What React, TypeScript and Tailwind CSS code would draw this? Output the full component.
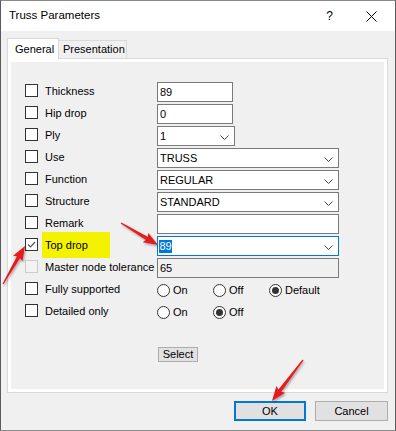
import React from 'react';

const font = { fontFamily: '"Liberation Sans", Arial, sans-serif' };

function Chevron() {
  return (
    <svg width="9" height="5" viewBox="0 0 9 5" className="absolute right-[5px] top-[8px]">
      <polyline points="0.5,0.5 4.5,4.5 8.5,0.5" fill="none" stroke="#444" strokeWidth="1" />
    </svg>
  );
}

function Checkbox({ checked = false, disabled = false }: { checked?: boolean; disabled?: boolean }) {
  return (
    <div
      className={`mt-[2px] h-[13px] w-[13px] shrink-0 border ${
        disabled ? 'border-[#cccccc] bg-[#f3f3f3]' : 'border-[#333333] bg-white'
      }`}
    >
      {checked && (
        <svg width="11" height="11" viewBox="0 0 11 11">
          <polyline points="2,5.5 4.5,8 9,3" fill="none" stroke="#555" strokeWidth="1.2" />
        </svg>
      )}
    </div>
  );
}

function Radio({ label, checked = false }: { label: string; checked?: boolean }) {
  return (
    <div className="flex w-[56px] items-center">
      <div className="flex h-[13px] w-[13px] items-center justify-center rounded-full border border-[#333333] bg-white">
        {checked && <div className="h-[7px] w-[7px] rounded-full bg-[#333333]" />}
      </div>
      <span className="ml-[3px]">{label}</span>
    </div>
  );
}

type Row = {
  label: string;
  width?: number;
  value?: string;
  kind: 'input' | 'select' | 'radio';
  radios?: { label: string; checked?: boolean }[];
};

const rows: Row[] = [
  { label: 'Thickness', kind: 'input', width: 76, value: '89' },
  { label: 'Hip drop', kind: 'input', width: 76, value: '0' },
  { label: 'Ply', kind: 'select', width: 78, value: '1' },
  { label: 'Use', kind: 'select', width: 182, value: 'TRUSS' },
  { label: 'Function', kind: 'select', width: 182, value: 'REGULAR' },
  { label: 'Structure', kind: 'select', width: 182, value: 'STANDARD' },
  { label: 'Remark', kind: 'input', width: 182, value: '' },
];

function arrow(x1: number, y1: number, x2: number, y2: number) {
  const len = Math.hypot(x2 - x1, y2 - y1);
  const dx = (x2 - x1) / len;
  const dy = (y2 - y1) / len;
  const nx = -dy;
  const ny = dx;
  const L = 13;
  const bx = x2 - dx * L;
  const by = y2 - dy * L;
  const p = (x: number, y: number) => `${x.toFixed(1)},${y.toFixed(1)}`;
  return [
    p(x1 + nx * 0.6, y1 + ny * 0.6),
    p(bx + nx * 1.8, by + ny * 1.8),
    p(bx + nx * 5.5 - dx * 1.5, by + ny * 5.5 - dy * 1.5),
    p(x2, y2),
    p(bx - nx * 5.5 - dx * 1.5, by - ny * 5.5 - dy * 1.5),
    p(bx - nx * 1.8, by - ny * 1.8),
    p(x1 - nx * 0.6, y1 - ny * 0.6),
  ].join(' ');
}

export default function App() {
  return (
    <div
      className="relative flex h-[431px] w-[396px] flex-col border border-x-[#5a5a5a] border-y-[#8a8a8a] bg-[#f0f0f0] text-[11px] text-black"
      style={font}
    >
      {/* Title bar */}
      <div className="flex h-[30px] shrink-0 items-center bg-white pl-[8px]">
        <span className="text-[11.5px]">Truss Parameters</span>
        <span className="ml-auto mr-[33px] text-[12px]">?</span>
        <svg width="11" height="11" viewBox="0 0 11 11" className="mr-[18px]">
          <line x1="0.5" y1="0.5" x2="10.5" y2="10.5" stroke="#000" strokeWidth="1" />
          <line x1="10.5" y1="0.5" x2="0.5" y2="10.5" stroke="#000" strokeWidth="1" />
        </svg>
      </div>

      <div className="flex flex-col pl-[6px] pr-[7px] pt-[7px]">
        {/* Tabs */}
        <div className="flex h-[20px] items-end">
          <div className="relative z-10 -mb-px flex h-[21px] w-[52px] items-center border-x border-t border-[#d9d9d9] bg-white pl-[7px]">
            General
          </div>
          <div className="flex h-[18px] w-[68px] items-center border-r border-t border-[#d9d9d9] bg-[#f0f0f0] pl-[4px]">
            Presentation
          </div>
        </div>

        {/* Panel */}
        <div className="flex h-[335px] flex-col border border-[#d9d9d9] bg-white p-[3px]">
          <div className="flex flex-1 flex-col gap-[2px] bg-[#f0f0f0] pl-[14px] pt-[20px]">
            {rows.map((r) => (
              <div key={r.label} className="flex h-[20px] items-start">
                <Checkbox />
                <div className="ml-[7px] flex h-[18px] w-[112px] items-center">{r.label}</div>
                <div
                  className="relative flex h-[20px] items-center border border-[#7a7a7a] bg-white pl-[2px]"
                  style={{ width: r.width }}
                >
                  {r.value}
                  {r.kind === 'select' && <Chevron />}
                </div>
              </div>
            ))}

            {/* Top drop */}
            <div className="flex h-[20px] items-start">
              <Checkbox checked />
              <div className="ml-[7px] flex h-[18px] w-[112px] items-center">
                <span className="-ml-[3px] flex h-[26px] w-[68px] items-center bg-[#f3f300] pl-[3px]">Top drop</span>
              </div>
              <div className="relative flex h-[20px] w-[182px] items-center border border-[#0078d7] bg-white pl-[1px]">
                <span className="bg-[#0078d7] px-[0.5px] leading-[13px] text-white">89</span>
                <Chevron />
              </div>
            </div>

            {/* Master node tolerance */}
            <div className="flex h-[20px] items-start">
              <Checkbox disabled />
              <div className="ml-[7px] flex h-[18px] w-[112px] items-center">Master node tolerance</div>
              <div className="flex h-[20px] w-[182px] items-center border border-[#7a7a7a] bg-[#f0f0f0] pl-[2px]">
                65
              </div>
            </div>

            <div className="flex h-[20px] items-start">
              <Checkbox />
              <div className="ml-[7px] flex h-[18px] w-[112px] items-center">Fully supported</div>
              <div className="flex h-[20px] items-center">
                <Radio label="On" />
                <Radio label="Off" />
                <Radio label="Default" checked />
              </div>
            </div>

            <div className="flex h-[20px] items-start">
              <Checkbox />
              <div className="ml-[7px] flex h-[18px] w-[112px] items-center">Detailed only</div>
              <div className="flex h-[20px] items-center">
                <Radio label="On" />
                <Radio label="Off" checked />
              </div>
            </div>

            <div className="mt-[23px] ml-[133px] flex h-[15px] w-[40px] items-center justify-center border border-[#adadad] bg-[#e1e1e1]">
              Select
            </div>
          </div>
        </div>

        {/* Buttons */}
        <div className="mt-[8px] flex justify-end gap-[9px]">
          <div className="flex h-[20px] w-[72px] items-center justify-center border-2 border-[#0078d7] bg-[#e1e1e1]">OK</div>
          <div className="flex h-[20px] w-[73px] items-center justify-center border border-[#adadad] bg-[#e1e1e1]">Cancel</div>
        </div>
      </div>

      {/* Annotation arrows */}
      <svg className="pointer-events-none absolute -left-px -top-px" width="396" height="431">
        <defs>
          <filter id="sh" x="-50%" y="-50%" width="200%" height="200%">
            <feDropShadow dx="1" dy="1.5" stdDeviation="1.2" floodColor="#000" floodOpacity="0.35" />
          </filter>
        </defs>
        <g fill="#e51f1f" filter="url(#sh)">
          <polygon points={arrow(3, 284, 25, 246)} />
          <polygon points={arrow(121, 223, 158, 245)} />
          <polygon points={arrow(303, 360, 272, 401)} />
        </g>
      </svg>
    </div>
  );
}
